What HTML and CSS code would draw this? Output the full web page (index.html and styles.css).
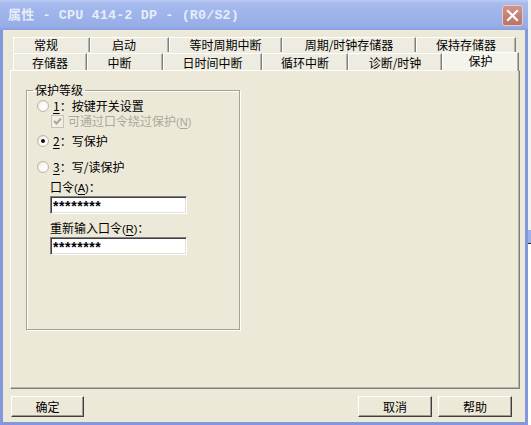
FILE: index.html
```html
<!DOCTYPE html>
<html lang="zh-CN">
<head>
<meta charset="utf-8">
<title>属性 - CPU 414-2 DP - (R0/S2)</title>
<link rel="stylesheet" href="styles.css">
</head>
<body>
<div class="screen">
  <div class="window">
    <div class="titlebar">
      <span class="title"><span class="cjk">属性</span> - CPU 414-2 DP - (R0/S2)</span>
      <span class="close">
        <svg width="13" height="13" viewBox="0 0 13 13"><path d="M2 2 L11 11 M11 2 L2 11" stroke="#fff" stroke-width="2.2" stroke-linecap="square"/></svg>
      </span>
    </div>
    <div class="client">
      <div class="tabs">
        <div class="tabrow back">
          <div class="tab w77 short">常规</div>
          <div class="tab w79 short">启动</div>
          <div class="tab w113">等时周期中断</div>
          <div class="tab w134">周期/时钟存储器</div>
          <div class="tab w100">保持存储器</div>
        </div>
        <div class="tabrow front">
          <div class="tab w74">存储器</div>
          <div class="tab w76 short">中断</div>
          <div class="tab w99">日时间中断</div>
          <div class="tab w86">循环中断</div>
          <div class="tab w94">诊断/时钟</div>
          <div class="tab w77 selected">保护</div>
        </div>
      </div>
      <div class="panel">
        <fieldset class="group">
          <legend>保护等级</legend>
          <div class="opt r1"><span class="radio"></span><span class="lbl"><u>1</u>：按键开关设置</span></div>
          <div class="opt chk"><span class="checkbox"><svg width="9" height="9" viewBox="0 0 9 9"><path d="M1 4 L3.5 6.5 L8 1.5" fill="none" stroke="#ACA899" stroke-width="2"/></svg></span><span class="lbl dis">可通过口令绕过保护<span class="acc">(<u>N</u>)</span></span></div>
          <div class="opt r2"><span class="radio on"></span><span class="lbl"><u>2</u>：写保护</span></div>
          <div class="opt r3"><span class="radio"></span><span class="lbl"><u>3</u>：写/读保护</span></div>
          <div class="field-label l1">口令<span class="acc">(<u>A</u>)</span>：</div>
          <div class="input i1">********</div>
          <div class="field-label l2">重新输入口令<span class="acc">(<u>R</u>)</span>：</div>
          <div class="input i2">********</div>
        </fieldset>
      </div>
      <div class="buttons">
        <div class="btn ok">确定</div>
        <div class="spacer"></div>
        <div class="btn">取消</div>
        <div class="btn help">帮助</div>
      </div>
    </div>
  </div>
  <div class="edge"></div>
</div>
</body>
</html>
```
FILE: styles.css
```css
html, body {
  margin: 0;
  padding: 0;
}
body {
  width: 531px;
  height: 425px;
  overflow: hidden;
  background: #ffffff;
  font-family: "Noto Sans CJK SC", sans-serif;
  font-size: 12px;
  color: #000;
}
.screen {
  display: flex;
  width: 531px;
  height: 425px;
}
.window {
  width: 528px;
  height: 425px;
  display: flex;
  flex-direction: column;
  background: #8397DD;
}
.titlebar {
  height: 30px;
  flex: none;
  display: flex;
  align-items: center;
  justify-content: space-between;
  padding: 0 5px 0 8px;
  box-sizing: border-box;
  background: linear-gradient(to bottom, #BBCBF4 0%, #A6BAEE 12%, #9DB3EA 50%, #97ADE7 88%, #8AA0DD 100%);
}
.title {
  font-family: "Liberation Mono", "Noto Sans CJK SC", monospace;
  font-weight: bold;
  font-size: 13.4px;
  color: #E6ECF9;
  letter-spacing: 0.15px;
  white-space: pre;
  line-height: 16px;
}
.title .cjk {
  font-family: "Noto Sans CJK SC", sans-serif;
  font-size: 13px;
}
.close {
  width: 21px;
  height: 21px;
  box-sizing: border-box;
  border: 1px solid #E9C9C4;
  border-radius: 3px;
  background: linear-gradient(to bottom, #D2948A, #C27F74 60%, #B9756B);
  display: flex;
  align-items: center;
  justify-content: center;
}
.close svg { display: block; }

.client {
  flex: 1;
  margin: 0 3px 3px 3px;
  background: #ECE9D8;
  display: flex;
  flex-direction: column;
  padding: 7px 5px 5px 7px;
  box-sizing: border-box;
}

/* tabs */
.tabs {
  flex: none;
  margin-left: 3px;
}
.tabrow {
  display: flex;
}
.tabrow.back {
  height: 15px;
}
.tabrow.front {
  height: 18px;
}
.tab {
  box-sizing: border-box;
  display: flex;
  align-items: center;
  justify-content: center;
  background: #EEECE1;
  border-top: 1px solid #FFFFFF;
  border-left: 1px solid #FFFFFF;
  border-right: 1px solid #7E7E7E;
  box-shadow: inset -1px 0 0 #B8B6AC;
  line-height: 14px;
  white-space: nowrap;
}
.tabrow.front .tab {
  margin-top: 1px;
  padding-top: 1px;
}
.tab.short { padding-right: 11px; }
.tabrow.front .tab.selected {
  margin-top: 0;
  padding-top: 0;
  height: 19px;
  background: #F4F3EC;
  padding-bottom: 2px;
  position: relative;
  z-index: 1;
}
.w74 { width: 74px; }
.w76 { width: 76px; }
.w77 { width: 77px; }
.w79 { width: 79px; }
.w86 { width: 86px; }
.w94 { width: 94px; }
.w99 { width: 99px; }
.w100 { width: 100px; }
.w113 { width: 113px; }
.w134 { width: 134px; }

/* panel */
.panel {
  width: 510px;
  height: 319px;
  flex: none;
  box-sizing: border-box;
  border-top: 1px solid #FFFFFF;
  border-left: 1px solid #FFFFFF;
  border-right: 1px solid #7E7E7E;
  border-bottom: 1px solid #7E7E7E;
  box-shadow: inset -1px -1px 0 #B8B6AC;
  background: #ECE9D8;
  padding: 0;
  display: flex;
  flex-direction: column;
}
.group {
  margin: 12px 0 0 15px;
  padding: 0;
  width: 214px;
  height: 247px;
  box-sizing: border-box;
  border: 1px solid #A3A296;
  box-shadow: inset 1px 1px 0 #FFFFFF, 1px 1px 0 #FFFFFF;
  display: block;
  min-width: 0;
}
.group legend {
  margin-left: 6px;
  padding: 0 2px;
  line-height: 14px;
  height: 14px;
}
.opt {
  display: flex;
  align-items: center;
  height: 14px;
  line-height: 14px;
  margin-left: 10px;
}
.opt.r1 { margin-top: 2px; }
.opt.chk { margin-top: 1px; margin-left: 24px; }
.opt.r2 { margin-top: 6px; }
.opt.r3 { margin-top: 12px; }
.radio {
  width: 12px;
  height: 12px;
  margin: 0 1px 0 0;
  box-sizing: border-box;
  border-radius: 50%;
  border: 1px solid #B9B6AC;
  background: radial-gradient(circle at 62% 62%, #FFFFFF 0%, #F7F6F2 55%, #D8D5CA 100%);
  display: flex;
  align-items: center;
  justify-content: center;
  flex: none;
}
.radio.on::after {
  content: "";
  width: 4px;
  height: 4px;
  border-radius: 50%;
  background: #111;
}
.checkbox {
  width: 13px;
  height: 13px;
  box-sizing: border-box;
  border: 1px solid #C5C3B8;
  background: #F1EFE6;
  display: flex;
  align-items: center;
  justify-content: center;
  flex: none;
}
.checkbox svg { display: block; }
.lbl {
  margin-left: 3px;
  white-space: nowrap;
}
.chk .lbl { margin-left: 4px; }
.lbl.dis { color: #ACA899; }
.acc {
  font-family: "Liberation Sans", sans-serif;
  font-size: 11px;
}
u { text-decoration-thickness: 1px; text-underline-offset: 2px; }
.field-label {
  margin-left: 23px;
  height: 14px;
  line-height: 14px;
  white-space: nowrap;
}
.field-label.l1 { margin-top: 6px; }
.field-label.l2 { margin-top: 7px; }
.input {
  margin-left: 23px;
  margin-top: 2px;
  width: 137px;
  height: 18px;
  box-sizing: border-box;
  background: #FFFFFF;
  border-top: 1px solid #808080;
  border-left: 1px solid #808080;
  border-right: 1px solid #FFFFFF;
  border-bottom: 1px solid #FFFFFF;
  box-shadow: inset 1px 1px 0 #404040, inset -1px -1px 0 #E4E2D8;
  padding-left: 2px;
  font-family: "Liberation Sans", sans-serif;
  font-weight: bold;
  font-size: 14px;
  letter-spacing: 0.6px;
  line-height: 19px;
  overflow: hidden;
}

/* buttons */
.buttons {
  flex: none;
  display: flex;
  margin-top: 7px;
  height: 21px;
  width: 510px;
  gap: 6px;
}
.spacer { flex: 1; }
.btn {
  width: 74px;
  height: 21px;
  box-sizing: border-box;
  border-top: 1px solid #FFFFFF;
  border-left: 1px solid #FFFFFF;
  border-right: 1px solid #404040;
  border-bottom: 1px solid #404040;
  box-shadow: inset -1px -1px 0 #9D9B90;
  background: #ECE9D8;
  display: flex;
  align-items: center;
  justify-content: center;
  line-height: 14px;
}
.btn.ok { width: 73px; margin-left: 1px; }
.btn.help { margin-right: 8px; }

.edge {
  width: 3px;
  height: 425px;
  background: linear-gradient(to bottom, #F2F2F2 0, #F2F2F2 230px, #9DB1EA 230px, #9DB1EA 243px, #2B2B2B 243px, #2B2B2B 244px, #FFFFFF 244px);
}
```
